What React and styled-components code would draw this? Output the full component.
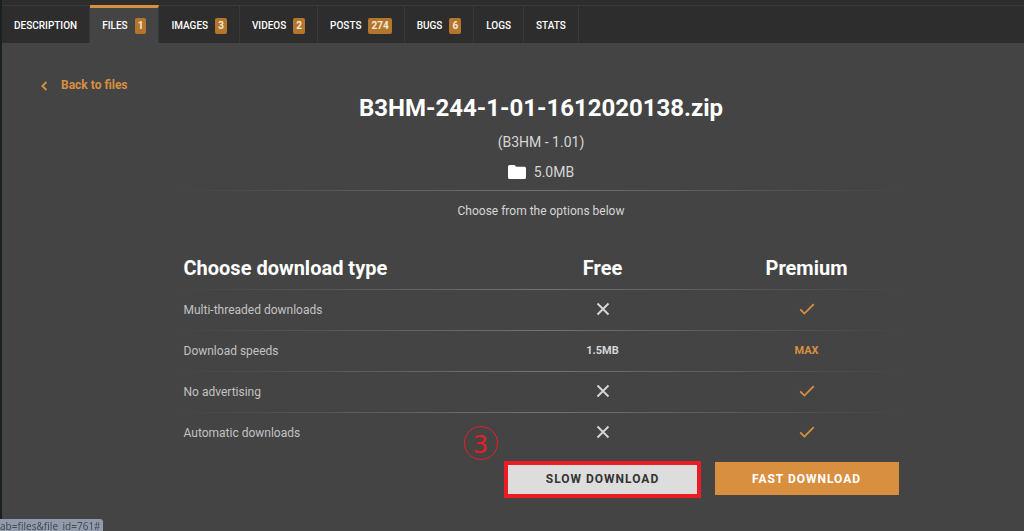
import React from 'react'
import styled, { createGlobalStyle, ThemeProvider } from 'styled-components'

const theme = {
  body: '#444444',
  nav: '#2d2d2d',
  line: '#393939',
  accent: '#d98f40',
  badge: '#b4762d',
  text: '#d6d6d6',
  label: '#c2c2c2',
  mark: '#ed1c24',
}

const fade = 'linear-gradient(to right, transparent, #727272 50%, transparent)'

const GlobalStyle = createGlobalStyle`
*, *::before, *::after {
  box-sizing: border-box;
}

body {
  margin: 0;
  background: ${theme.body};
  font-family: Roboto, 'Liberation Sans', sans-serif;
}
`

const Page = styled.div`
min-height: 100vh;
border-left: 2px solid #1d2021;
background: ${props => props.theme.body};
color: ${props => props.theme.text};
`

const TabBar = styled.nav`
display: flex;
padding-top: 5px;
height: 43px;
background: linear-gradient(${props => props.theme.line}, ${props => props.theme.line}) 0 5px / 100% 1px no-repeat ${props => props.theme.nav};
`

const Tab = styled.a`
display: flex;
align-items: center;
padding: ${props => (props.$active ? '0 12px' : '3px 12px 0')};
border-top: ${props => (props.$active ? `3px solid ${props.theme.accent}` : 'none')};
border-right: 1px solid ${props => props.theme.line};
background: ${props => (props.$active ? props.theme.body : 'transparent')};
color: #ffffff;
font-size: 10px;
font-weight: 500;
line-height: 16px;
text-transform: uppercase;
text-decoration: none;
`

const Badge = styled.span`
margin-left: 7px;
padding: 0 3px;
border-radius: 2px;
background: ${props => props.theme.badge};
color: #f4e8d8;
font-size: 10px;
font-weight: 700;
line-height: 16px;
`

const Content = styled.main`
padding: 34px 0 0 38px;
`

const BackLink = styled.a`
display: flex;
align-items: center;
gap: 12px;
width: fit-content;
height: 17px;
color: ${props => props.theme.accent};
font-size: 12px;
font-weight: 700;
line-height: 17px;
text-decoration: none;
`

const PanelArea = styled.div`
padding-left: 18px;
`

const Panel = styled.section`
max-width: 735px;
margin: 0 auto;
`

const Header = styled.header`
display: flex;
flex-direction: column;
align-items: center;
`

const Title = styled.h1`
margin: 0;
color: #ffffff;
font-size: 24px;
font-weight: 700;
line-height: 28px;
`

const Info = styled.p`
display: flex;
align-items: center;
gap: 8px;
margin: 10px 0 0;
font-size: 14px;
line-height: 20px;
`

const Hint = styled.p`
margin: 0;
font-size: 12px;
line-height: 40px;
`

const Rule = styled.hr`
width: 100%;
height: 1px;
margin: 8px 0 0;
border: 0;
background: ${fade};
`

const Table = styled.table`
width: 100%;
margin-top: 15px;
border-collapse: collapse;
table-layout: fixed;
`

const Row = styled.tr`
height: 41px;
background: ${props => (props.$last ? 'none' : `${fade} bottom / 100% 1px no-repeat`)};
`

const Head = styled.th`
width: ${props => (props.$first ? 'auto' : '204px')};
height: 44px;
padding: 0 10px;
color: #ffffff;
font-size: 20px;
font-weight: 700;
text-align: ${props => (props.$first ? 'left' : 'center')};
`

const Label = styled.th`
padding: 0 10px 2px;
color: ${props => props.theme.label};
font-size: 12px;
font-weight: 400;
text-align: left;
`

const Cell = styled.td`
padding: 0 10px 3px;
color: ${props => (props.$premium ? props.theme.accent : props.theme.text)};
font-size: 11px;
font-weight: 700;
text-align: center;

svg {
  display: block;
  margin: 0 auto;
}
`

const Actions = styled.div`
display: grid;
grid-template-columns: 204px 204px;
justify-content: end;
margin-top: 8px;
`

const Button = styled.button`
height: 33px;
margin: 0 10px;
padding: 0;
border: 0;
background: ${props => props.theme.accent};
color: #ffffff;
font-family: inherit;
font-size: 12px;
font-weight: 700;
letter-spacing: 1px;
text-transform: uppercase;
cursor: pointer;
`

const SlowButton = styled(Button)`
margin: 0 7px;
background: #dddddd;
color: #333333;
`

const Marked = styled.div`
position: relative;
display: grid;

&::after {
  content: '';
  position: absolute;
  inset: -1px 4px -3px 3px;
  border: 4px solid ${props => props.theme.mark};
  pointer-events: none;
}
`

const Step = styled.span`
position: absolute;
top: -36px;
left: -37px;
width: 34px;
height: 34px;
border: 1px solid ${props => props.theme.mark};
border-radius: 50%;
color: ${props => props.theme.mark};
font-family: 'Noto Sans', sans-serif;
font-size: 25px;
line-height: 32px;
text-align: center;
`

const StatusBar = styled.div`
position: fixed;
left: 0;
bottom: 0;
width: 103px;
height: 12px;
border-top-right-radius: 3px;
background: #929bab;
color: #484d56;
font-family: 'Noto Sans', sans-serif;
font-size: 10px;
line-height: 14px;
white-space: nowrap;
`

const Chevron = () => (
  <svg width="9" height="10" viewBox="0 0 9 10" fill="none" stroke="currentColor" strokeWidth="1.9" aria-hidden="true">
    <path d="M6.4 1 2.4 5l4 4" />
  </svg>
)

const Folder = () => (
  <svg width="18" height="14" viewBox="0 0 18 14" fill="#ffffff" aria-hidden="true">
    <path d="M1.5 0h5l1.8 1.8h8.200A1.5 1.5 0 0 1 18 3.3v9.200a1.5 1.5 0 0 1-1.5 1.5h-15A1.5 1.5 0 0 1 0 12.5v-11A1.5 1.5 0 0 1 1.5 0z" />
  </svg>
)

const Cross = () => (
  <svg width="14" height="14" viewBox="0 0 14 14" fill="none" stroke="currentColor" strokeWidth="1.9" role="img" aria-label="No">
    <path d="M1.5 1.5l11 11M12.5 1.5l-11 11" />
  </svg>
)

const Check = () => (
  <svg width="16" height="14" viewBox="0 0 16 14" fill="none" stroke="currentColor" strokeWidth="1.8" role="img" aria-label="Yes">
    <path d="M1.2 7.4l4.2 4.2L14.8 2.2" />
  </svg>
)

const tabs = [
  { name: 'Description' },
  { name: 'Files', count: 1, active: true },
  { name: 'Images', count: 3 },
  { name: 'Videos', count: 2 },
  { name: 'Posts', count: 274 },
  { name: 'Bugs', count: 6 },
  { name: 'Logs' },
  { name: 'Stats' },
]

const features = [
  { name: 'Multi-threaded downloads' },
  { name: 'Download speeds', free: '1.5MB', premium: 'MAX' },
  { name: 'No advertising' },
  { name: 'Automatic downloads' },
]

const App = () => {
  return (
    <ThemeProvider theme={theme}>
      <GlobalStyle />
      <Page>
        <TabBar>
          {
            tabs.map((t) => {
              return (
                <Tab key={t.name} href="#" $active={t.active}>
                  {t.name}
                  {t.count && <Badge>{t.count}</Badge>}
                </Tab>
              )
            })
          }
        </TabBar>
        <Content>
          <BackLink href="#"><Chevron />Back to files</BackLink>
          <PanelArea>
            <Panel>
              <Header>
                <Title>B3HM-244-1-01-1612020138.zip</Title>
                <Info>(B3HM - 1.01)</Info>
                <Info><Folder />5.0MB</Info>
                <Rule />
                <Hint>Choose from the options below</Hint>
              </Header>
              <Table>
                <thead>
                  <Row>
                    <Head $first scope="col">Choose download type</Head>
                    <Head scope="col">Free</Head>
                    <Head scope="col">Premium</Head>
                  </Row>
                </thead>
                <tbody>
                  {
                    features.map((f, i) => {
                      return (
                        <Row key={f.name} $last={i === features.length - 1}>
                          <Label scope="row">{f.name}</Label>
                          <Cell>{f.free || <Cross />}</Cell>
                          <Cell $premium>{f.premium || <Check />}</Cell>
                        </Row>
                      )
                    })
                  }
                </tbody>
              </Table>
              <Actions>
                <Marked>
                  <Step>3</Step>
                  <SlowButton type="button">Slow download</SlowButton>
                </Marked>
                <Button type="button">Fast download</Button>
              </Actions>
            </Panel>
          </PanelArea>
        </Content>
        <StatusBar>ab=files&amp;file_id=761#</StatusBar>
      </Page>
    </ThemeProvider>
  )
}

export default App
